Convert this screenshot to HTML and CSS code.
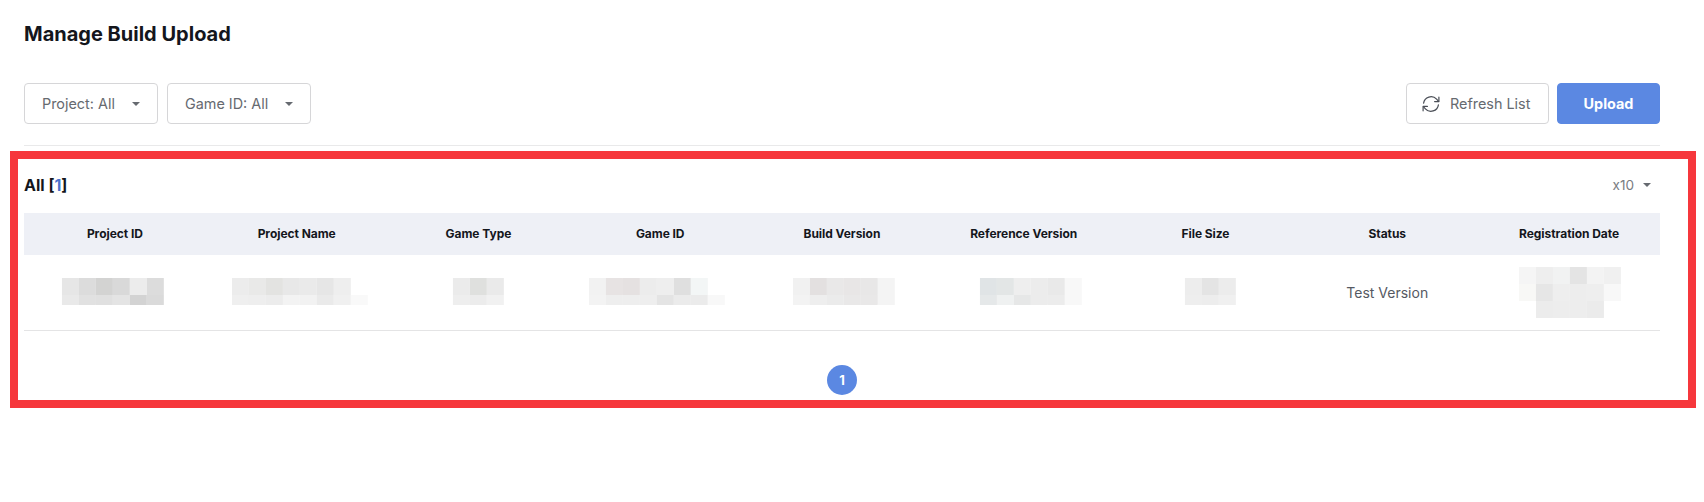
FILE: index.html
```html
<!DOCTYPE html>
<html lang="en">
<head>
<meta charset="utf-8">
<title>Manage Build Upload</title>
<link rel="stylesheet" href="styles.css">
</head>
<body>
<main class="page">
  <h1 class="title">Manage Build Upload</h1>
  <div class="toolbar">
    <div class="filters">
      <button class="btn select select-project">Project: All<span class="caret"></span></button>
      <button class="btn select select-game">Game ID: All<span class="caret"></span></button>
    </div>
    <div class="actions">
      <button class="btn refresh">
        <svg class="refresh-icon" viewBox="0 0 20 20" width="20" height="20" fill="none" stroke="#4a4e56" stroke-width="1.2" stroke-linecap="round" stroke-linejoin="round">
          <path d="M2.6 9.2A7.5 7.5 0 0 1 15.6 5.2L17.6 7.4"/>
          <path d="M17.9 3.2V7.6H13.6"/>
          <path d="M17.4 10.8A7.5 7.5 0 0 1 4.4 14.8L2.4 12.6"/>
          <path d="M2.1 16.8V12.4H6.4"/>
        </svg>
        Refresh List
      </button>
      <button class="btn upload">Upload</button>
    </div>
  </div>
  <section class="list">
    <div class="list-head">
      <div class="count">All [<span class="count-num">1</span>]</div>
      <div class="page-size">x10<span class="caret"></span></div>
    </div>
    <table class="grid">
      <thead>
        <tr>
          <th>Project ID</th><th>Project Name</th><th>Game Type</th><th>Game ID</th><th>Build Version</th><th>Reference Version</th><th>File Size</th><th>Status</th><th>Registration Date</th>
        </tr>
      </thead>
      <tbody>
        <tr>
          <td><svg class="mosaic" viewBox="0 0 182 51">
            <rect x="38" y="11" width="17" height="17" fill="#e6e6e6"/><rect x="55" y="11" width="17" height="17" fill="#dcdcdc"/><rect x="72" y="11" width="17" height="17" fill="#d3d3d2"/><rect x="89" y="11" width="17" height="17" fill="#d9d9d9"/><rect x="106" y="11" width="17" height="17" fill="#ececec"/><rect x="123" y="11" width="17" height="17" fill="#dcdcdc"/>
            <rect x="38" y="28" width="17" height="10" fill="#e9e9e9"/><rect x="55" y="28" width="17" height="10" fill="#e1e1e1"/><rect x="72" y="28" width="17" height="10" fill="#e0e0e0"/><rect x="89" y="28" width="17" height="10" fill="#e4e4e4"/><rect x="106" y="28" width="17" height="10" fill="#d3d3d3"/><rect x="123" y="28" width="17" height="10" fill="#dadada"/>
          </svg></td>
          <td><svg class="mosaic" viewBox="0 0 182 51">
            <rect x="26" y="11" width="17" height="17" fill="#ececec"/><rect x="43" y="11" width="17" height="17" fill="#e9e9e8"/><rect x="60" y="11" width="17" height="17" fill="#e3e3e1"/><rect x="77" y="11" width="17" height="17" fill="#e8e8e8"/><rect x="94" y="11" width="17" height="17" fill="#eaeaea"/><rect x="111" y="11" width="17" height="17" fill="#e6e6e6"/><rect x="128" y="11" width="17" height="17" fill="#eeeeee"/>
            <rect x="26" y="28" width="17" height="10" fill="#efefef"/><rect x="43" y="28" width="17" height="10" fill="#eeeeee"/><rect x="60" y="28" width="17" height="10" fill="#ececec"/><rect x="77" y="28" width="17" height="10" fill="#f3f3f3"/><rect x="94" y="28" width="17" height="10" fill="#f2f2f2"/><rect x="111" y="28" width="17" height="10" fill="#eaeaea"/><rect x="128" y="28" width="17" height="10" fill="#f0f0f0"/><rect x="145" y="28" width="17" height="10" fill="#f9f9f9"/>
          </svg></td>
          <td><svg class="mosaic" viewBox="0 0 182 51">
            <rect x="65" y="11" width="17" height="17" fill="#ebebeb"/><rect x="82" y="11" width="17" height="17" fill="#dfe0de"/><rect x="99" y="11" width="17" height="17" fill="#eaeaea"/>
            <rect x="65" y="28" width="17" height="10" fill="#eeeeee"/><rect x="82" y="28" width="17" height="10" fill="#ececec"/><rect x="99" y="28" width="17" height="10" fill="#f1f1f1"/>
          </svg></td>
          <td><svg class="mosaic" viewBox="0 0 182 51">
            <rect x="20" y="11" width="17" height="17" fill="#f2f2f2"/><rect x="37" y="11" width="17" height="17" fill="#e7e3e3"/><rect x="54" y="11" width="17" height="17" fill="#e5e1e1"/><rect x="71" y="11" width="17" height="17" fill="#ececec"/><rect x="88" y="11" width="17" height="17" fill="#eeeeee"/><rect x="105" y="11" width="17" height="17" fill="#dfdfdf"/><rect x="122" y="11" width="17" height="17" fill="#f3f6f6"/>
            <rect x="20" y="28" width="17" height="10" fill="#f3f3f3"/><rect x="37" y="28" width="17" height="10" fill="#eeeeee"/><rect x="54" y="28" width="17" height="10" fill="#eeeeee"/><rect x="71" y="28" width="17" height="10" fill="#eeeeee"/><rect x="88" y="28" width="17" height="10" fill="#e4e4e4"/><rect x="105" y="28" width="17" height="10" fill="#ebebeb"/><rect x="122" y="28" width="17" height="10" fill="#ebebeb"/><rect x="139" y="28" width="17" height="10" fill="#f8f8f8"/>
          </svg></td>
          <td><svg class="mosaic" viewBox="0 0 182 51">
            <rect x="42" y="11" width="17" height="17" fill="#f1f1f1"/><rect x="59" y="11" width="17" height="17" fill="#e3e0e0"/><rect x="76" y="11" width="17" height="17" fill="#e9e8e8"/><rect x="93" y="11" width="17" height="17" fill="#e8e6e6"/><rect x="110" y="11" width="17" height="17" fill="#e8e7e7"/><rect x="127" y="11" width="17" height="17" fill="#f4f4f4"/>
            <rect x="42" y="28" width="17" height="10" fill="#f3f3f3"/><rect x="59" y="28" width="17" height="10" fill="#eeeeee"/><rect x="76" y="28" width="17" height="10" fill="#ebebeb"/><rect x="93" y="28" width="17" height="10" fill="#e9e8e8"/><rect x="110" y="28" width="17" height="10" fill="#e9e8e8"/><rect x="127" y="28" width="17" height="10" fill="#f4f4f4"/>
          </svg></td>
          <td><svg class="mosaic" viewBox="0 0 182 51">
            <rect x="47" y="11" width="17" height="17" fill="#e0e4e6"/><rect x="64" y="11" width="17" height="17" fill="#e3e6e6"/><rect x="81" y="11" width="17" height="17" fill="#eeeeee"/><rect x="98" y="11" width="17" height="17" fill="#ececec"/><rect x="115" y="11" width="17" height="17" fill="#e9e9e9"/><rect x="132" y="11" width="17" height="17" fill="#f8f8f8"/>
            <rect x="47" y="28" width="17" height="10" fill="#e5e8e9"/><rect x="64" y="28" width="17" height="10" fill="#eff1f1"/><rect x="81" y="28" width="17" height="10" fill="#e6e7e7"/><rect x="98" y="28" width="17" height="10" fill="#ececec"/><rect x="115" y="28" width="17" height="10" fill="#ececec"/><rect x="132" y="28" width="17" height="10" fill="#f8f8f8"/>
          </svg></td>
          <td><svg class="mosaic" viewBox="0 0 182 51">
            <rect x="70" y="11" width="17" height="17" fill="#ededed"/><rect x="87" y="11" width="17" height="17" fill="#e4e4e4"/><rect x="104" y="11" width="17" height="17" fill="#ececec"/>
            <rect x="70" y="28" width="17" height="10" fill="#eeeeee"/><rect x="87" y="28" width="17" height="10" fill="#ededed"/><rect x="104" y="28" width="17" height="10" fill="#f0f0f0"/>
          </svg></td>
          <td class="status">Test Version</td>
          <td><svg class="mosaic" viewBox="0 0 182 51">
            <rect x="41" y="0" width="17" height="17" fill="#f5f5f5"/><rect x="58" y="0" width="17" height="17" fill="#eeeeee"/><rect x="75" y="0" width="17" height="17" fill="#f1f2f2"/><rect x="92" y="0" width="17" height="17" fill="#e4e4e4"/><rect x="109" y="0" width="17" height="17" fill="#f3f3f3"/><rect x="126" y="0" width="17" height="17" fill="#f0f0f0"/>
            <rect x="41" y="17" width="17" height="17" fill="#f8f8f6"/><rect x="58" y="17" width="17" height="17" fill="#e6e6e6"/><rect x="75" y="17" width="17" height="17" fill="#eeeeee"/><rect x="92" y="17" width="17" height="17" fill="#ededed"/><rect x="109" y="17" width="17" height="17" fill="#eeeeee"/><rect x="126" y="17" width="17" height="17" fill="#f8f8f8"/>
            <rect x="58" y="34" width="17" height="17" fill="#ececec"/><rect x="75" y="34" width="17" height="17" fill="#ededed"/><rect x="92" y="34" width="17" height="17" fill="#ededed"/><rect x="109" y="34" width="17" height="17" fill="#ebebeb"/>
          </svg></td>
        </tr>
      </tbody>
    </table>
    <nav class="pagination"><span class="page-num">1</span></nav>
  </section>
</main>
<div class="annotation"></div>
</body>
</html>
```

FILE: styles.css
```css
* { box-sizing: border-box; }
html, body { margin: 0; padding: 0; background: #fff; }
body { font-family: Inter, "Liberation Sans", sans-serif; color: #111318; height: 502px; overflow: hidden; }
.page { width: 1636px; margin-left: 24px; }
.title { margin: 0; padding-top: 21px; height: 46px; font-size: 20px; line-height: 26px; font-weight: 700; color: #14161c; }
.toolbar { display: flex; justify-content: space-between; margin-top: 37px; padding-bottom: 21px; border-bottom: 1px solid #e9e9ea; }
.filters { display: flex; gap: 9px; }
.actions { display: flex; gap: 8px; }
.btn { height: 41px; font-family: inherit; font-size: 14.4px; border: 1px solid #d6d6d8; border-radius: 4px; background: #fff; color: #666a70; display: flex; align-items: center; padding: 0; }
.select { padding-left: 17px; }
.select-project { width: 134px; }
.select-game { width: 144px; }
.caret { display: inline-block; width: 0; height: 0; border-left: 4px solid transparent; border-right: 4px solid transparent; border-top: 4px solid #666a70; }
.select .caret { margin-left: 17px; }
.refresh { width: 143px; padding-left: 14px; gap: 9px; }
.upload { width: 103px; justify-content: center; background: #5b88e2; border-color: #5b88e2; color: #fff; font-weight: 700; }
.list-head { display: flex; justify-content: space-between; align-items: center; padding: 27px 9px 16px 0; height: 67px; }
.count { font-size: 16px; font-weight: 700; line-height: 24px; color: #14161c; }
.count-num { color: #4a72cf; }
.page-size { font-size: 13.6px; color: #7a7d82; display: flex; align-items: center; gap: 9px; }
.grid { width: 100%; table-layout: fixed; border-collapse: collapse; }
.grid th { height: 42px; padding: 0 0 1px; background: #eef0f6; font-size: 12px; font-weight: 700; color: #14161c; text-align: center; letter-spacing: -0.05px; }
.grid td { height: 75px; padding: 0; border-bottom: 1px solid #e4e4e5; text-align: center; vertical-align: middle; font-size: 14px; color: #555962; }
.mosaic { display: block; width: 100%; height: 51px; }
.pagination { display: flex; justify-content: center; margin-top: 34px; }
.page-num { width: 30px; height: 30px; border-radius: 50%; background: #5b88e2; color: #fff; font-size: 13px; font-weight: 700; display: flex; align-items: center; justify-content: center; }
.annotation { position: absolute; left: 10px; top: 151px; width: 1686px; height: 257px; border: 8px solid #f6373c; pointer-events: none; }
```
